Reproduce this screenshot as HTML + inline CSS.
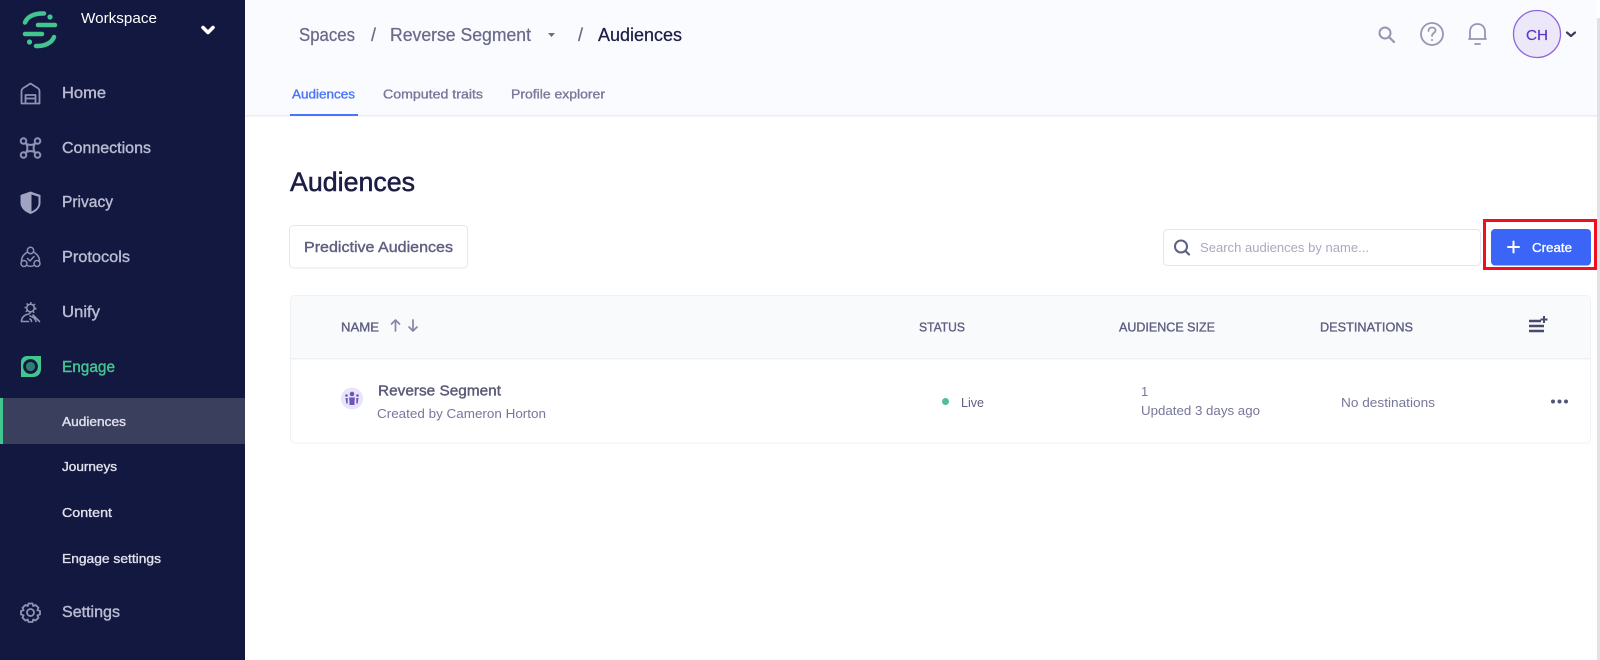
<!DOCTYPE html>
<html lang="en"><head><meta charset="utf-8"><title>Audiences</title>
<style>
html,body{margin:0;padding:0;width:1600px;height:660px;overflow:hidden;background:#fff}
svg{display:block}
text{font-family:"Liberation Sans",sans-serif}
.nav{font-size:16px;fill:#b9bbd2;stroke:#b9bbd2;stroke-width:.4px}
.sub{font-size:13px;fill:#e0e1ec;stroke:#e0e1ec;stroke-width:.35px}
.th{font-size:13px;fill:#5f5f82;stroke:#5f5f82;stroke-width:.35px}
.g{font-size:13px;fill:#77779a}
.ic{fill:none;stroke:#8f92b4;stroke-width:1.8px;stroke-linecap:round;stroke-linejoin:round}
.ti{fill:none;stroke:#9696b4;stroke-width:1.8px;stroke-linecap:round;stroke-linejoin:round}
</style></head><body>
<svg width="1600" height="660" viewBox="0 0 1600 660" xmlns="http://www.w3.org/2000/svg">
<rect width="1600" height="660" fill="#fff"/>
<!-- header -->
<rect x="245" y="0" width="1352" height="115" fill="#fafbfe"/>
<rect x="245" y="115" width="1352" height="1.5" fill="#eceef3"/>
<rect x="1597" y="18" width="3" height="642" fill="#e2e2e6"/>
<!-- sidebar -->
<rect x="0" y="0" width="245" height="660" fill="#12183f"/>
<rect x="0" y="398" width="245" height="46" fill="#3a3f5e"/>
<rect x="0" y="398" width="3" height="46" fill="#43c590"/>
<!-- logo -->
<g fill="none" stroke="#43c590" stroke-width="4.500" stroke-linecap="round">
<path d="M38 25H55"/><path d="M25 34H42"/>
<path d="M25 22.500C27 17 34 13 44 13.500"/><path d="M54 37C52 42.500 45 46.500 36 46"/>
</g>
<circle cx="50" cy="17" r="2.600" fill="#43c590"/><circle cx="29.500" cy="42" r="2.600" fill="#43c590"/>
<text x="81" y="23" font-size="15" fill="#fff" textLength="76" lengthAdjust="spacingAndGlyphs">Workspace</text>
<path d="M203 27.500L208 32.500L213 27.500" fill="none" stroke="#fff" stroke-width="3.600" stroke-linecap="round" stroke-linejoin="round"/>
<!-- nav icons -->
<path class="ic" d="M21.500 103.500V91C21.500 89 23 88 25 87L30.500 83.500L36 87C38 88 39.500 89 39.500 91V103.500ZM25.500 103.500V95H35.500V103.500M25.500 98.500H35.500"/>
<g class="ic" style="stroke-width:2px"><circle cx="23.500" cy="141" r="2.800"/><circle cx="37.500" cy="141" r="2.800"/><circle cx="23.500" cy="155" r="2.800"/><circle cx="37.500" cy="155" r="2.800"/><path d="M25.500 143C28 145.500 33 145.500 35.500 143C33 145.500 33 150.500 35.500 153C33 150.500 28 150.500 25.500 153C28 150.500 28 145.500 25.500 143Z"/></g>
<path d="M30.500 191.500L40.500 195V203C40.500 208 36 212 30.500 214C25 212 20.500 208 20.500 203V195Z" fill="#a0a3c2"/>
<path d="M31.500 194.500V211.500C35.500 209.500 38.500 207 38.500 203V196.800Z" fill="#12183f"/>
<g class="ic" style="stroke-width:1.500px"><circle cx="30.500" cy="250.500" r="3.200"/><circle cx="24" cy="263.500" r="3"/><circle cx="37" cy="263.500" r="3"/><path d="M27.500 252C24 254 21.500 257 21.500 261M33.500 252C37 254 39.500 257 39.500 261M27 265.500C29 266.500 32 266.500 34 265.500M27.500 258.500L30 261L34 256.500"/></g>
<g class="ic" style="stroke-width:1.600px"><circle cx="30.500" cy="308" r="3.800"/><circle cx="30.500" cy="308" r="5.200" stroke-dasharray="1.500 2.500" style="stroke-linecap:butt"/><path d="M21.500 321.500C21.500 317 25 314.500 29 314M21.500 321.500H28.500M30 316C34 317 35.500 319 36 321.500M33 315L39.500 321.500M31.500 321.500C31.500 320 31 319.500 30 319"/></g>
<path d="M27 356H41V369C41 373.500 38 377 33 377H21V362C21 358.500 23.500 356 27 356Z" fill="#43c590"/>
<circle cx="30.500" cy="366.500" r="6" fill="#2e7f70" stroke="#12183f" stroke-width="2.800"/>
<g class="ic"><circle cx="30.500" cy="612.500" r="3.500"/><path d="M28.500 603.500H32.500L33.200 606L35.600 605L38.500 607.800L37.400 610.200L40 611V614.500L37.400 615.300L38.500 617.700L35.600 620.500L33.200 619.500L32.500 622H28.500L27.800 619.500L25.400 620.500L22.500 617.700L23.600 615.300L21 614.500V611L23.600 610.200L22.500 607.800L25.400 605L27.800 606Z"/></g>
<!-- nav text -->
<text class="nav" x="62" y="98" textLength="44" lengthAdjust="spacingAndGlyphs">Home</text>
<text class="nav" x="62" y="153" textLength="89" lengthAdjust="spacingAndGlyphs">Connections</text>
<text class="nav" x="62" y="207" textLength="51" lengthAdjust="spacingAndGlyphs">Privacy</text>
<text class="nav" x="62" y="262" textLength="68" lengthAdjust="spacingAndGlyphs">Protocols</text>
<text class="nav" x="62" y="317" textLength="38" lengthAdjust="spacingAndGlyphs">Unify</text>
<text class="nav" x="62" y="372" textLength="53" lengthAdjust="spacingAndGlyphs" style="fill:#43c590;stroke:#43c590">Engage</text>
<text class="sub" x="62" y="426" textLength="64" lengthAdjust="spacingAndGlyphs">Audiences</text>
<text class="sub" x="62" y="471" textLength="55" lengthAdjust="spacingAndGlyphs">Journeys</text>
<text class="sub" x="62" y="517" textLength="50" lengthAdjust="spacingAndGlyphs">Content</text>
<text class="sub" x="62" y="563" textLength="99" lengthAdjust="spacingAndGlyphs">Engage settings</text>
<text class="nav" x="62" y="617" textLength="58" lengthAdjust="spacingAndGlyphs">Settings</text>
<!-- breadcrumb -->
<g font-size="18" fill="#6a6a8a" stroke="#6a6a8a" stroke-width=".25">
<text x="299" y="41" textLength="56" lengthAdjust="spacingAndGlyphs">Spaces</text>
<text x="371" y="41">/</text>
<text x="390" y="41" textLength="141" lengthAdjust="spacingAndGlyphs">Reverse Segment</text>
<text x="578" y="41">/</text>
<text x="598" y="41" textLength="84" lengthAdjust="spacingAndGlyphs" fill="#1c1d45" stroke="#1c1d45">Audiences</text>
</g>
<path d="M548 33H555L551.500 37Z" fill="#6a6a8a"/>
<!-- tabs -->
<g font-size="13" stroke-width=".35">
<text x="292" y="98.500" textLength="63" lengthAdjust="spacingAndGlyphs" fill="#4a74fa" stroke="#4a74fa">Audiences</text>
<text x="383" y="98.500" textLength="100" lengthAdjust="spacingAndGlyphs" fill="#77789a" stroke="#77789a">Computed traits</text>
<text x="511" y="98.500" textLength="94" lengthAdjust="spacingAndGlyphs" fill="#77789a" stroke="#77789a">Profile explorer</text>
</g>
<rect x="290" y="114" width="68" height="2" fill="#4a74fa"/>
<!-- top right icons -->
<circle cx="1385" cy="33" r="5.500" fill="none" stroke="#9696b4" stroke-width="2"/>
<path d="M1389.500 37.500L1394 42" stroke="#9696b4" stroke-width="2.200" stroke-linecap="round"/>
<circle cx="1432" cy="34" r="11" class="ti"/>
<path class="ti" d="M1428.500 31C1428.500 28.800 1430 27.500 1432 27.500C1434 27.500 1435.500 28.800 1435.500 30.500C1435.500 33 1432 33 1432 36"/>
<circle cx="1432" cy="40" r="1" fill="#9696b4"/>
<path class="ti" d="M1470 39V32C1470 27 1473 24 1477.500 24C1482 24 1485 27 1485 32V39M1469 39H1486M1475 44H1480"/>
<circle cx="1537" cy="34" r="23.500" fill="#ece8fa" stroke="#8f66dc" stroke-width="1.300"/>
<text x="1526" y="40" font-size="15" fill="#5b37c4" stroke="#5b37c4" stroke-width=".2" textLength="22" lengthAdjust="spacingAndGlyphs">CH</text>
<path d="M1567 32.500L1571 36L1575 32.500" fill="none" stroke="#3c3c5c" stroke-width="2.200" stroke-linecap="round" stroke-linejoin="round"/>
<!-- title -->
<text x="290" y="191" font-size="27" fill="#1c1d45" textLength="125" lengthAdjust="spacingAndGlyphs" stroke="#1c1d45" stroke-width=".55">Audiences</text>
<!-- predictive btn -->
<rect x="289.500" y="225.500" width="178" height="42.500" rx="4" fill="#fff" stroke="#e6e7ee"/>
<text x="304" y="252" font-size="15" fill="#5f5f82" stroke="#5f5f82" stroke-width=".4" textLength="149" lengthAdjust="spacingAndGlyphs">Predictive Audiences</text>
<!-- search -->
<rect x="1163.500" y="229.500" width="317" height="36" rx="4" fill="#fff" stroke="#e4e5ed"/>
<circle cx="1181" cy="246.500" r="6" fill="none" stroke="#5f5f82" stroke-width="2"/>
<path d="M1185.500 251L1189 254.500" stroke="#5f5f82" stroke-width="2.200" stroke-linecap="round"/>
<text x="1200" y="252" font-size="13" fill="#a9a9c2" textLength="169" lengthAdjust="spacingAndGlyphs">Search audiences by name...</text>
<!-- create -->
<rect x="1484.500" y="220.500" width="111" height="48" fill="none" stroke="#f0101f" stroke-width="3"/>
<rect x="1491" y="229" width="100" height="36.500" rx="4" fill="#3b65f7"/>
<path d="M1513.500 241.500V252.500M1508 247H1519" stroke="#fff" stroke-width="2" stroke-linecap="round"/>
<text x="1532" y="252" font-size="13" fill="#fff" stroke="#fff" stroke-width=".35" textLength="40" lengthAdjust="spacingAndGlyphs">Create</text>
<!-- table -->
<rect x="290.500" y="295.500" width="1300" height="147.500" rx="4" fill="#fff" stroke="#f0f1f5"/>
<path d="M291 358V299.500A4 4 0 0 1 295 296H1586A4 4 0 0 1 1590 299.500V358Z" fill="#f8fafc"/>
<rect x="291" y="358" width="1299" height="1.500" fill="#eef0f4"/>
<text class="th" x="341" y="331.500" textLength="38" lengthAdjust="spacingAndGlyphs">NAME</text>
<path d="M395.500 331V320M391.500 324L395.500 320L399.500 324M413 320V331M409 327L413 331L417 327" fill="none" stroke="#8585aa" stroke-width="1.700" stroke-linecap="round" stroke-linejoin="round"/>
<text class="th" x="919" y="331.500" textLength="46" lengthAdjust="spacingAndGlyphs">STATUS</text>
<text class="th" x="1119" y="331.500" textLength="96" lengthAdjust="spacingAndGlyphs">AUDIENCE SIZE</text>
<text class="th" x="1320" y="331.500" textLength="93" lengthAdjust="spacingAndGlyphs">DESTINATIONS</text>
<path d="M1529 321H1541M1529 326H1544M1529 331H1544" stroke="#4a4a6c" stroke-width="2.400"/>
<path d="M1544 316V323M1540.500 319.500H1547.500" stroke="#4a4a6c" stroke-width="2"/>
<!-- row -->
<circle cx="352" cy="398.500" r="11" fill="#e8e4fa"/>
<g fill="#6f55b8">
<circle cx="352" cy="394" r="2.300"/>
<path d="M349 397.500H355L354.500 401.500V405H349.500V401.500Z"/>
<circle cx="346.500" cy="395.500" r="1.300"/><circle cx="357.500" cy="395.500" r="1.300"/>
<path d="M345.500 398H347.700V403.500H346.300ZM356.300 398H358.500L357.700 403.500H356.300Z"/>
</g>
<text x="378" y="395.500" font-size="15" fill="#5a5a78" stroke="#5a5a78" stroke-width=".4" textLength="123" lengthAdjust="spacingAndGlyphs">Reverse Segment</text>
<text class="g" x="377" y="418" textLength="169" lengthAdjust="spacingAndGlyphs">Created by Cameron Horton</text>
<circle cx="945.500" cy="401.500" r="3.500" fill="#4fbf94"/>
<text x="961" y="407" font-size="13" fill="#5f5f82" textLength="23" lengthAdjust="spacingAndGlyphs">Live</text>
<text class="g" x="1141" y="396">1</text>
<text class="g" x="1141" y="415" textLength="119" lengthAdjust="spacingAndGlyphs">Updated 3 days ago</text>
<text class="g" x="1341" y="407" textLength="94" lengthAdjust="spacingAndGlyphs">No destinations</text>
<circle cx="1553" cy="401.500" r="2" fill="#55557a"/><circle cx="1559.500" cy="401.500" r="2" fill="#55557a"/><circle cx="1566" cy="401.500" r="2" fill="#55557a"/>
</svg>
</body></html>
